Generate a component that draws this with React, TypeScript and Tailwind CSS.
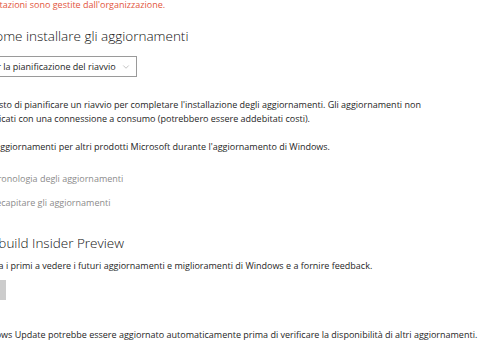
import { ChevronDown } from "lucide-react";

const font = { fontFamily: '"Open Sans", "Noto Sans", sans-serif' };

export default function App() {
  return (
    <div className="w-[500px] h-[350px] overflow-hidden bg-white" style={font}>
      <div className="ml-[-59px] flex flex-col text-[9px] leading-[14px] text-[#262626] whitespace-nowrap">
        {/* avviso organizzazione */}
        <p className="mt-[-2px] ml-[-3px] text-[#e2553c]">
          *Alcune impostazioni sono gestite dall'organizzazione.
        </p>

        <h2 className="mt-[14px] ml-[10px] text-[13.5px] leading-[20px] font-light text-[#111]">
          Scegli come installare gli aggiornamenti
        </h2>

        <div className="mt-[10px]">
          <button
            type="button"
            className="h-[21px] flex items-center gap-[5px] pl-[10px] pr-[5px] border border-[#9a9a9a] text-[9px] text-[#262626]"
          >
            <span>Notifica per la pianificazione del riavvio</span>
            <ChevronDown className="w-[10px] h-[10px] text-[#888]" strokeWidth={1.2} />
          </button>
        </div>

        <p className="mt-[21px]">
          <span className="block ml-[7px]">
            Ti verrà chiesto di pianificare un riavvio per completare l'installazione degli aggiornamenti. Gli aggiornamenti non
          </span>
          <span className="block">
            verranno scaricati con una connessione a consumo (potrebbero essere addebitati costi).
          </span>
        </p>

        <label className="mt-[11px] flex items-center gap-[8px]">
          <span className="w-[20px] h-[20px] border-2 border-[#333]" />
          <span>Ricevi aggiornamenti per altri prodotti Microsoft durante l'aggiornamento di Windows.</span>
        </label>

        <div className="mt-[15px] flex flex-col gap-[10px] text-[#8c8c8c]">
          <a>Visualizza la cronologia degli aggiornamenti</a>
          <a>Scegli come recapitare gli aggiornamenti</a>
        </div>

        <h2 className="mt-[23px] ml-[13px] text-[13.5px] leading-[20px] font-light text-[#111]">
          Ottieni build Insider Preview
        </h2>

        <p className="mt-[6px]">
          Puoi essere tra i primi a vedere i futuri aggiornamenti e miglioramenti di Windows e a fornire feedback.
        </p>

        <div className="mt-[7px]">
          <button type="button" className="w-[65px] h-[20px] bg-[#cccccc] text-[9px] text-[#cccccc]">
            Per iniziare
          </button>
        </div>

        <p className="mt-[28px] ml-[8px]">
          Nota: Windows Update potrebbe essere aggiornato automaticamente prima di verificare la disponibilità di altri aggiornamenti.
        </p>
      </div>
    </div>
  );
}
